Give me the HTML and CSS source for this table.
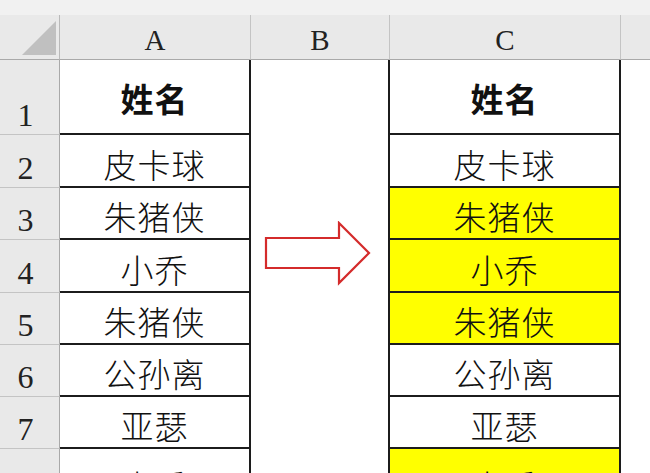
FILE: index.html
```html
<!DOCTYPE html>
<html lang="zh">
<head>
<meta charset="utf-8">
<link rel="stylesheet" href="styles.css">
</head>
<body>
<div class="sheet">
  <div class="topstrip"></div>
  <div class="grid">
    <div class="corner"><span class="tri"></span></div>
    <div class="colhdr">A</div>
    <div class="colhdr">B</div>
    <div class="colhdr">C</div>
    <div class="colhdr last"></div>

    <div class="rowhdr">1</div>
    <div class="cell a bold">姓名</div>
    <div class="cell b"></div>
    <div class="cell c bold">姓名</div>
    <div class="cell d"></div>

    <div class="rowhdr">2</div>
    <div class="cell a">皮卡球</div>
    <div class="cell b"></div>
    <div class="cell c">皮卡球</div>
    <div class="cell d"></div>

    <div class="rowhdr">3</div>
    <div class="cell a">朱猪侠</div>
    <div class="cell b"></div>
    <div class="cell c hl">朱猪侠</div>
    <div class="cell d"></div>

    <div class="rowhdr">4</div>
    <div class="cell a">小乔</div>
    <div class="cell b"></div>
    <div class="cell c hl">小乔</div>
    <div class="cell d"></div>

    <div class="rowhdr">5</div>
    <div class="cell a">朱猪侠</div>
    <div class="cell b"></div>
    <div class="cell c hl">朱猪侠</div>
    <div class="cell d"></div>

    <div class="rowhdr">6</div>
    <div class="cell a">公孙离</div>
    <div class="cell b"></div>
    <div class="cell c">公孙离</div>
    <div class="cell d"></div>

    <div class="rowhdr">7</div>
    <div class="cell a">亚瑟</div>
    <div class="cell b"></div>
    <div class="cell c">亚瑟</div>
    <div class="cell d"></div>

    <div class="rowhdr">8</div>
    <div class="cell a">小乔</div>
    <div class="cell b"></div>
    <div class="cell c hl">小乔</div>
    <div class="cell d"></div>
  </div>
  <svg class="arrow" width="110" height="66" viewBox="0 0 110 66">
    <polygon points="2,17 75,17 75,2 105,32 75,62 75,47 2,47" fill="#ffffff" stroke="#d42b2b" stroke-width="2.2" stroke-linejoin="miter"/>
  </svg>
</div>
</body>
</html>
```
FILE: styles.css
```css
html, body {
  margin: 0;
  padding: 0;
  background: #ffffff;
}
.sheet {
  position: relative;
  width: 650px;
  height: 473px;
  overflow: hidden;
}
.topstrip {
  height: 15px;
  background: #f1f1f1;
}
.grid {
  display: grid;
  grid-template-columns: 60px 191px 139px 231px 1fr;
  grid-template-rows: 45px 75px 53px 52px 53px 52px 52px 52px 60px;
}
.grid > div {
  box-sizing: border-box;
}
.corner {
  background: #e9e9e9;
  border-right: 1px solid #b9b9b9;
  border-bottom: 1px solid #a9a9a9;
  position: relative;
}
.tri {
  position: absolute;
  right: 3px;
  bottom: 4px;
  width: 0;
  height: 0;
  border-left: 34px solid transparent;
  border-bottom: 34px solid #c0c0c0;
}
.colhdr {
  background: #e9e9e9;
  border-right: 1px solid #c4c4c4;
  border-bottom: 1px solid #a9a9a9;
  display: flex;
  align-items: flex-end;
  justify-content: center;
  padding-bottom: 4px;
  font-family: "Liberation Serif", "Times New Roman", serif;
  font-size: 29px;
  line-height: 1;
  color: #222;
}
.colhdr.last {
  border-right: none;
}
.rowhdr {
  background: #e9e9e9;
  border-right: 1px solid #a9a9a9;
  border-bottom: 1px solid #c4c4c4;
  display: flex;
  align-items: flex-end;
  justify-content: center;
  padding-right: 8px;
  padding-bottom: 3px;
  font-family: "Liberation Serif", "Times New Roman", serif;
  font-size: 32px;
  line-height: 1;
  color: #222;
}
.cell {
  display: flex;
  align-items: flex-end;
  justify-content: center;
  padding-bottom: 5px;
  font-family: "Noto Sans CJK SC", "Noto Sans", sans-serif;
  font-weight: 300;
  font-size: 33px;
  line-height: 1;
  color: #111;
  letter-spacing: 1px;
}
.cell.a {
  border-right: 2px solid #1c1c1c;
  border-bottom: 2px solid #1c1c1c;
}
.cell.b {
  border-right: 2px solid #1c1c1c;
}
.cell.c {
  border-right: 2px solid #1c1c1c;
  border-bottom: 2px solid #1c1c1c;
}
.cell.bold {
  font-weight: 700;
  padding-bottom: 18px;
}
.cell.hl {
  background: #ffff00;
}
.arrow {
  position: absolute;
  left: 264px;
  top: 221px;
}
```
